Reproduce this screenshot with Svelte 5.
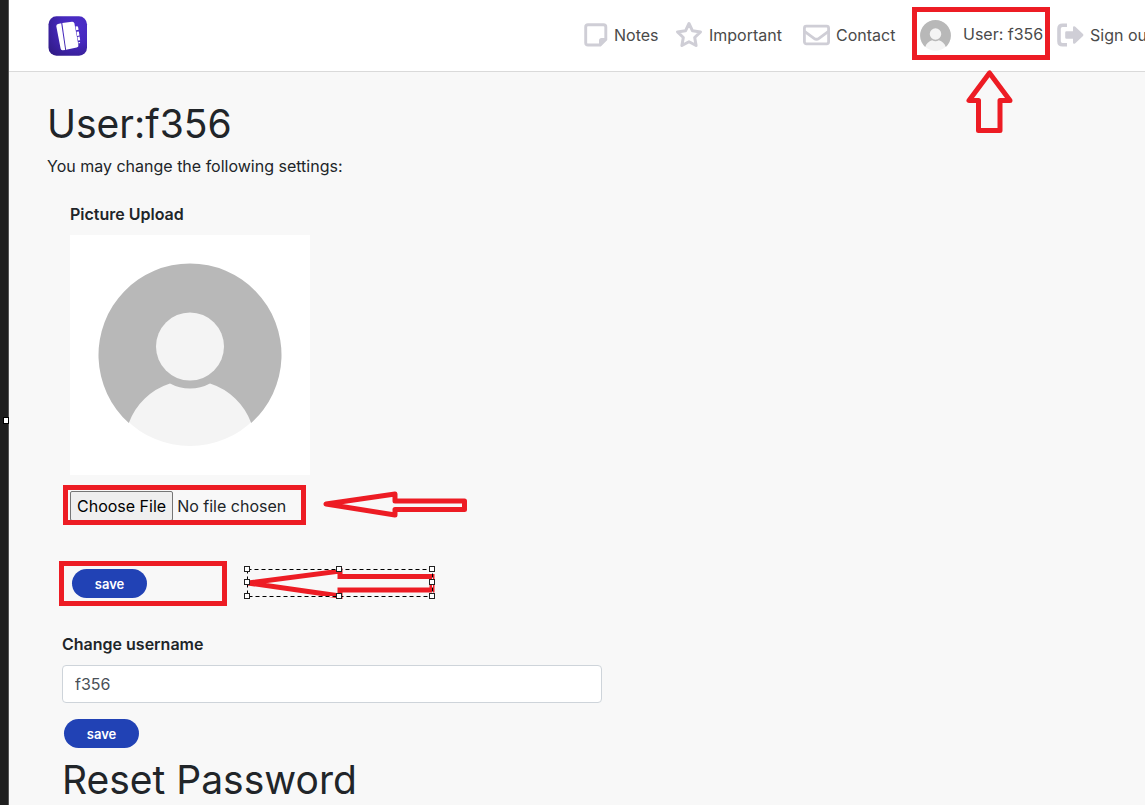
<script>
  let username = $state('f356');
</script>

{#snippet avatar(box)}
  <svg viewBox={box} aria-hidden="true">
    <circle cx="120" cy="120" r="91" fill="#f4f4f4" />
    <path d="M58.800 188A91.500 91.500 0 1 1 181.200 188A65 65 0 0 0 140 148.500A42 42 0 0 1 100 148.500A65 65 0 0 0 58.800 188z" fill="#b8b8b8" />
    <circle cx="120" cy="111.500" r="34" fill="#f4f4f4" />
  </svg>
{/snippet}

<div class="shell">
  <div class="edge"><span class="grip"></span></div>

  <div class="page">
    <header>
      <a class="logo" href="#home" aria-label="Home">
        <svg viewBox="0 0 40 40" aria-hidden="true">
          <defs>
            <radialGradient id="logo-fill" cx="0.75" cy="0.25" r="0.95">
              <stop offset="0" stop-color="#4c2ec9" />
              <stop offset="0.45" stop-color="#4629bd" />
              <stop offset="1" stop-color="#311b88" />
            </radialGradient>
          </defs>
          <rect x="0.5" y="0.3" width="38.5" height="39.4" rx="8" fill="url(#logo-fill)" />
          <g fill="#fff">
            <path d="M10 8l3.200-.7 4 26.600-2.600.3q-1.700.1-2-1.600L8.300 10.300Q8.200 8.500 10 8z" />
            <path d="M14.300 7.100l9.700-1.400q2-.2 2.400 1.700l4 21.600q.3 2-1.700 2.600l-10.600 2.100z" />
            <path d="M27.500 10.500l1.500-.2q1 0 1.100.9l.5 2.500-2.400.5zM28.500 15.800l2.300-.4.7 4-2.300.5zM29.400 21l2.200-.4.6 3.600-2.100.4zM30.300 26.200l1.600-.3.3 1.200-1.700.4z" />
          </g>
        </svg>
      </a>

      <nav>
        <a href="#notes">
          <svg width="24" height="24" viewBox="0 0 24 24" aria-hidden="true">
            <path d="M4 1.700h15.500q2.300 0 2.300 2.300V16.500L16.200 22H4q-2.300 0-2.300-2.300V4q0-2.300 2.300-2.300z" fill="none" stroke="#cfced6" stroke-width="2.900" />
            <path d="M15 22.500V17.500q0-2.500 2.500-2.500h5v2L16.500 23z" fill="#cfced6" />
          </svg>
          <span>Notes</span>
        </a>
        <a href="#important">
          <svg width="28" height="28" viewBox="0 0 28 28" aria-hidden="true">
            <path d="M14 2.500l3.500 7.300 8 1.100-5.800 5.600 1.400 8-7.100-3.800-7.100 3.800 1.400-8L2.500 10.900l8-1.100z" fill="none" stroke="#cfced6" stroke-width="3" stroke-linejoin="round" />
          </svg>
          <span>Important</span>
        </a>
        <a href="#contact">
          <svg width="27" height="22" viewBox="0 0 27 22" aria-hidden="true">
            <rect x="1.400" y="2.200" width="24.200" height="17.600" rx="2" fill="none" stroke="#cfced6" stroke-width="2.800" />
            <path d="M1.500 7.300l9.500 7q2.500 1.800 5 0l9.500-7" fill="none" stroke="#cfced6" stroke-width="2.800" />
          </svg>
          <span>Contact</span>
        </a>
        <a class="user" href="#user">
          <span class="face">{@render avatar('28 28 184 184')}</span>
          <span>User: f356</span>
          <svg class="arrow up" width="48" height="65" viewBox="0 0 48 65" aria-hidden="true">
            <path d="M24.500 4L4 31.500H13.500V61.500H35V31.500H45z" fill="none" stroke="#ed1c24" stroke-width="5" stroke-linejoin="round" />
          </svg>
        </a>
        <a href="#signout">
          <svg width="27" height="24" viewBox="0 0 27 24" aria-hidden="true">
            <path d="M10 2.200H5.500Q2 2.200 2 5.700v12.600q0 3.500 3.500 3.500H10" fill="none" stroke="#cfced6" stroke-width="3.600" />
            <path d="M9.500 8.200H16V4.500q.2-2 2-.9l8 7.300q.9 1.100 0 2.200l-8 7.300q-1.800 1.100-2-.9v-3.700H9.500q-1.300 0-1.300-1.300V9.500q0-1.300 1.300-1.300z" fill="#cfced6" />
          </svg>
          <span>Sign out</span>
        </a>
      </nav>
    </header>

    <main>
      <h1>User:f356</h1>
      <p>You may change the following settings:</p>

      <form class="upload">
        <label for="picture">Picture Upload</label>
        <div class="photo">{@render avatar('0 0 240 240')}</div>
        <div class="file">
          <input id="picture" type="file" />
          <svg class="arrow left" width="146" height="28" viewBox="0 0 146 28" aria-hidden="true">
            <path d="M4 14L73 4V11H142.500V19.500H73V25z" fill="none" stroke="#ed1c24" stroke-width="5" stroke-linejoin="round" />
          </svg>
        </div>
        <div class="submit">
          <button type="button">save</button>
          <svg class="arrow selected" width="194" height="36" viewBox="0 0 194 36" aria-hidden="true">
            <path d="M5 18L97 6V11.500H189V25H97V31z" fill="none" stroke="#ed1c24" stroke-width="5" />
            <path d="M4.500 4.500H189.500V31.500H4.500z" fill="none" stroke="#f8f8f8" stroke-width="1" />
            <path d="M4.500 4.500H189.500V31.500H4.500z" fill="none" stroke="#000" stroke-width="1" stroke-dasharray="4 3" />
            {#each [[2, 2], [94, 2], [187, 2], [2, 15], [187, 15], [2, 29], [94, 29], [187, 29]] as [x, y]}
              <rect x={x - 0.5} y={y - 0.5} width="5" height="5" fill="#fff" stroke="#222" />
            {/each}
          </svg>
        </div>
      </form>

      <form class="rename">
        <label for="username">Change username</label>
        <input id="username" type="text" bind:value={username} />
        <button type="button">save</button>
      </form>

      <h1 class="reset">Reset Password</h1>
    </main>
  </div>
</div>

<style>
  :global(body) {
    margin: 0;
    overflow-x: hidden;
    background: #f8f8f8;
  }

  .shell,
  .shell * {
    box-sizing: border-box;
  }

  .shell {
    display: flex;
    height: 100vh;
    overflow: hidden;
    font: 16px/24px Inter, 'Liberation Sans', sans-serif;
    color: #212529;
  }

  svg {
    display: block;
    flex: none;
  }

  .edge {
    position: relative;
    flex: none;
    width: 9px;
    background: #1f1f1f;
    border-right: 1px solid #555;
  }

  .grip {
    position: absolute;
    top: 417px;
    left: 3px;
    width: 6px;
    height: 7px;
    background: #fff;
    border: 1px solid #000;
  }

  .page {
    flex: 1;
    min-width: 0;
    overflow: hidden;
  }

  header {
    display: flex;
    justify-content: space-between;
    height: 72px;
    padding-left: 39px;
    background: #fff;
    border-bottom: 1px solid #dadada;
  }

  .logo {
    padding-top: 16px;
  }

  .logo svg {
    width: 40px;
    height: 40px;
  }

  nav {
    display: grid;
    grid-template-columns: 91px 128px 109px 145px 100px;
    margin-right: -12px;
  }

  nav a {
    display: flex;
    align-items: center;
    gap: 6px;
    height: 70px;
    color: #4a4a4a;
    text-decoration: none;
    white-space: nowrap;
  }

  nav .user {
    position: relative;
    align-self: start;
    justify-self: start;
    gap: 12px;
    width: 138px;
    height: 53px;
    margin-top: 7px;
    padding-left: 3px;
    border: 5px solid #ed1c24;
  }

  .face {
    width: 31px;
    padding-top: 4px;
  }

  .arrow {
    position: absolute;
  }

  .up {
    top: 57px;
    left: 48px;
  }

  main {
    padding: 28px 38px 0;
  }

  h1 {
    margin: 0;
    font-size: 39px;
    font-weight: 400;
    line-height: 48px;
  }

  p {
    margin: 6px 0 24px;
  }

  label {
    display: block;
    margin-bottom: 9px;
    font-weight: 600;
  }

  .upload {
    padding-left: 23px;
  }

  .photo {
    width: 240px;
    height: 240px;
    background: #fff;
  }

  .file,
  .submit {
    position: relative;
    border: 5px solid #ed1c24;
  }

  .file {
    width: 243px;
    height: 40px;
    margin: 10px 0 0 -7px;
    padding: 1px 0 0 2px;
  }

  .file input {
    display: block;
    width: 100%;
    height: 29px;
    font: inherit;
    color: inherit;
  }

  .file input::file-selector-button {
    height: 30px;
    padding: 0 6px;
    font: inherit;
    color: #000;
    background: #efefef;
    border: 1px solid #767676;
    border-radius: 2px;
  }

  .left {
    top: 0;
    left: 254px;
  }

  .submit {
    width: 168px;
    height: 45px;
    margin: 36px 0 0 -11px;
    padding: 3px 8px;
  }

  .selected {
    top: -1px;
    left: 179px;
  }

  button {
    display: block;
    width: 75px;
    height: 29px;
    padding: 0;
    font: 600 13px/20px Inter, 'Liberation Sans', sans-serif;
    color: #fff;
    background: #2142b5;
    border: 0;
    border-radius: 15px;
  }

  .rename {
    margin-top: 26px;
    padding-left: 15px;
  }

  .rename input {
    display: block;
    width: 100%;
    max-width: 540px;
    height: 38px;
    padding: 6px 12px;
    font: inherit;
    color: #495057;
    background: #fff;
    border: 1px solid #ced4da;
    border-radius: 4px;
  }

  .rename button {
    margin: 16px 0 0 2px;
  }

  .reset {
    margin-top: 8px;
    padding-left: 15px;
  }
</style>
